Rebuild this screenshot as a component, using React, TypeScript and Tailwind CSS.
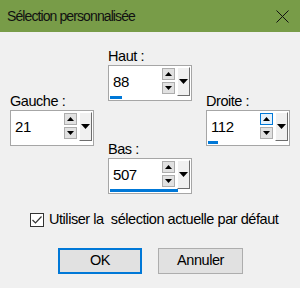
import React from "react";

type SpinProps = {
  value: string;
  bar?: number;
  hot?: boolean;
};

function SpinBox({ value, bar = 0, hot = false }: SpinProps) {
  return (
    <div className="relative w-[84px] h-[36px] border border-[#a6a6a6] bg-white flex">
      <div className="flex-1 flex items-center pl-[4px] pb-[1px] text-[15px] text-black">{value}</div>
      <div className="flex flex-col w-[13px] mt-[2px] gap-[2px]">
        <div
          className={`h-[12px] border flex items-center justify-center ${
            hot ? "border-[#0078d7] bg-[#e5f1fb]" : "border-[#adadad] bg-[#e1e1e1]"
          }`}
        >
          <svg width="7" height="4" viewBox="0 0 7 4">
            <polygon points="3.5,0 7,4 0,4" fill="#000" />
          </svg>
        </div>
        <div className="h-[12px] border border-[#adadad] bg-[#e1e1e1] flex items-center justify-center">
          <svg width="7" height="4" viewBox="0 0 7 4">
            <polygon points="0,0 7,0 3.5,4" fill="#000" />
          </svg>
        </div>
      </div>
      <div className="ml-[2px] mr-[1px] mt-[1px] w-[13px] h-[29px] bg-[#f0f0f0] border-t border-l border-white border-r border-b border-r-[#6d6d6d] border-b-[#6d6d6d] flex items-center justify-center">
        <svg width="9" height="5" viewBox="0 0 9 5">
          <polygon points="0,0 9,0 4.5,5" fill="#000" />
        </svg>
      </div>
      {bar > 0 && (
        <div className="absolute left-[1px] bottom-[1px] h-[3px] bg-[#0078d7]" style={{ width: bar }} />
      )}
    </div>
  );
}

function Field({ label, ...rest }: SpinProps & { label: string }) {
  return (
    <div className="flex flex-col">
      <div className="h-[18px] leading-[18px]">{label}</div>
      <SpinBox {...rest} />
    </div>
  );
}

export default function App() {
  return (
    <div className="w-[300px] h-[288px] bg-[#f0f0f0] font-['Liberation_Sans',sans-serif] text-[14.5px] tracking-[-0.45px] text-black flex flex-col overflow-hidden">
      {/* title bar */}
      <div className="h-[32px] shrink-0 bg-[#789c48] flex items-center pl-[7px] pr-[11px]">
        <span className="flex-1 text-[14px] tracking-[-0.9px] text-[#111]">Sélection personnalisée</span>
        <svg width="13" height="13" viewBox="0 0 13 13">
          <path d="M0.5 0.5 L12.5 12.5 M12.5 0.5 L0.5 12.5" stroke="#111" strokeWidth="1" />
        </svg>
      </div>

      <div className="grid grid-cols-[84px_84px_84px] gap-x-[14px] px-[10px]">
        <div className="pt-[60px]">
          <Field label="Gauche :" value="21" />
        </div>
        <div className="pt-[15px] flex flex-col gap-[39px]">
          <Field label="Haut :" value="88" bar={12} />
          <Field label="Bas :" value="507" bar={68} />
        </div>
        <div className="pt-[60px]">
          <Field label="Droite :" value="112" bar={10} hot />
        </div>
      </div>

      <label className="mt-[16px] ml-[30px] h-[20px] flex items-center gap-[5px]">
        <span className="w-[14px] h-[14px] border border-[#333] bg-white flex items-center justify-center">
          <svg width="12" height="12" viewBox="0 0 12 12">
            <path d="M1.5 6 L4.5 9 L10.5 2.5" stroke="#333" strokeWidth="1.2" fill="none" />
          </svg>
        </span>
        <span className="whitespace-pre">Utiliser la  sélection actuelle par défaut</span>
      </label>

      <div className="mt-[18px] flex pl-[58px] gap-[16px]">
        <button className="w-[84px] h-[26px] border-2 border-[#0078d7] bg-[#e1e1e1]">OK</button>
        <button className="w-[85px] h-[26px] border border-[#adadad] bg-[#e1e1e1]">Annuler</button>
      </div>
    </div>
  );
}
